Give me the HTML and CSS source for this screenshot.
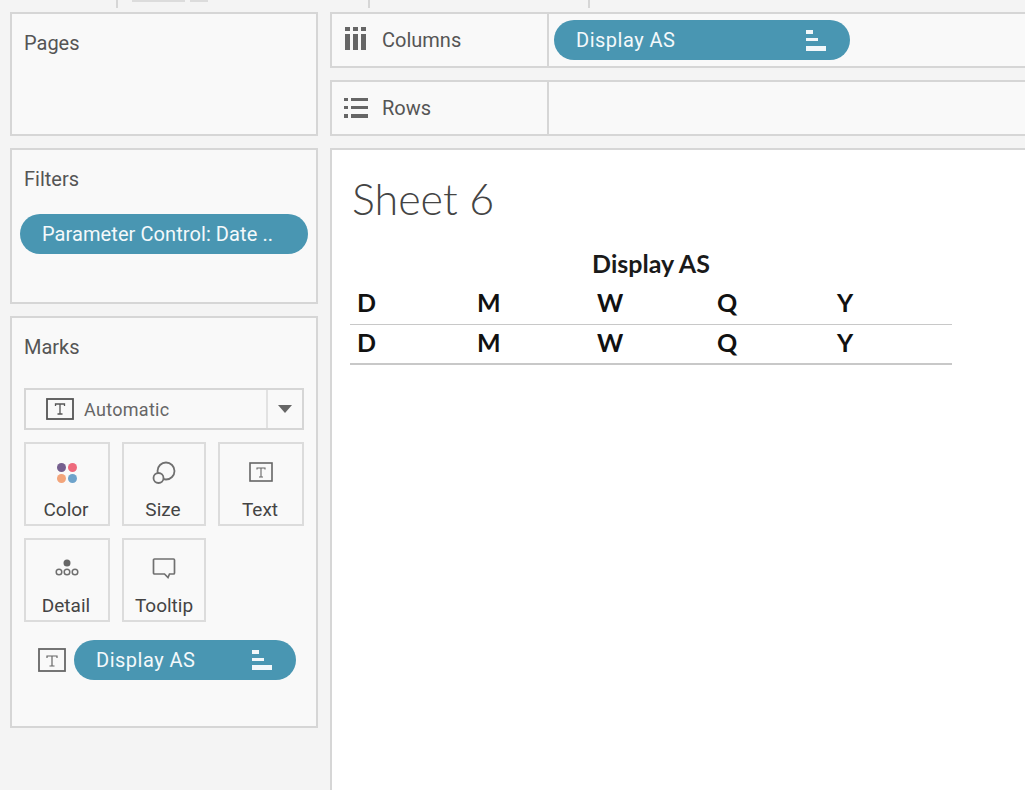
FILE: index.html
```html
<!DOCTYPE html>
<html lang="en">
<head>
<meta charset="utf-8">
<title>Sheet 6</title>
<link rel="stylesheet" href="styles.css">
</head>
<body>
<div class="topstrip">
  <span class="tick tick-a"></span>
  <span class="stub stub-a"></span>
  <span class="stub stub-b"></span>
  <span class="tick tick-b"></span>
  <span class="tick tick-c"></span>
</div>
<div class="workspace">
  <aside class="side">
    <section class="card card-pages"><h2 class="card-title">Pages</h2></section>
    <section class="card card-filters">
      <h2 class="card-title">Filters</h2>
      <div class="pill pill-filter"><span>Parameter Control: Date ..</span></div>
    </section>
    <section class="card card-marks">
      <h2 class="card-title">Marks</h2>
      <div class="dropdown">
        <div class="dropdown-main">
          <svg class="t-big" width="28" height="22" viewBox="0 0 28 22"><rect x="1" y="1" width="26" height="20" fill="none" stroke="#555" stroke-width="1.8"/><path d="M9.500 8V6h9v2M14 6v10M11.500 16h5" fill="none" stroke="#555" stroke-width="1.3"/></svg>
          <span>Automatic</span>
        </div>
        <div class="dropdown-arrow"><svg width="14" height="8" viewBox="0 0 14 8"><path d="M0 0h14L7 8z" fill="#666"/></svg></div>
      </div>
      <div class="mark-grid">
        <div class="mark">
          <svg width="24" height="24" viewBox="0 0 24 24"><circle cx="6.500" cy="6.500" r="4.500" fill="#76608f"/><circle cx="17.500" cy="6.500" r="4.500" fill="#ee6a7c"/><circle cx="6.500" cy="17.500" r="4.500" fill="#f3a57b"/><circle cx="17.500" cy="17.500" r="4.500" fill="#6ea3cb"/></svg>
          <span>Color</span>
        </div>
        <div class="mark">
          <svg width="26" height="24" viewBox="0 0 26 24"><circle cx="15" cy="10" r="8.500" fill="none" stroke="#707070" stroke-width="1.800"/><circle cx="7.500" cy="17" r="5" fill="#f9f9f9" stroke="#707070" stroke-width="1.800"/></svg>
          <span>Size</span>
        </div>
        <div class="mark">
          <svg width="24" height="24" viewBox="0 0 24 24"><rect x="1" y="2" width="22" height="18" fill="none" stroke="#666" stroke-width="1.600"/><path d="M8 8.500V7h8v1.500M12 7v9M10 16h4" fill="none" stroke="#666" stroke-width="1.100"/></svg>
          <span>Text</span>
        </div>
        <div class="mark">
          <svg width="28" height="24" viewBox="0 0 28 24"><circle cx="14" cy="6" r="3.500" fill="#666"/><circle cx="6" cy="15" r="2.800" fill="none" stroke="#707070" stroke-width="1.500"/><circle cx="14" cy="15" r="2.800" fill="none" stroke="#707070" stroke-width="1.500"/><circle cx="22" cy="15" r="2.800" fill="none" stroke="#707070" stroke-width="1.500"/></svg>
          <span>Detail</span>
        </div>
        <div class="mark mark-tip">
          <svg width="24" height="24" viewBox="0 0 24 24"><path d="M2.500 2h19a1 1 0 0 1 1 1v13a1 1 0 0 1-1 1h-4l-1.500 3.500L12.500 17h-10a1 1 0 0 1-1-1V3a1 1 0 0 1 1-1z" fill="none" stroke="#707070" stroke-width="1.700"/></svg>
          <span>Tooltip</span>
        </div>
      </div>
      <div class="mark-field">
        <svg width="28" height="24" viewBox="0 0 28 24"><rect x="1" y="1" width="26" height="22" fill="none" stroke="#666" stroke-width="1.800"/><path d="M9 10V8h10v2M14 8v10M11.500 18h5" fill="none" stroke="#666" stroke-width="1.200"/></svg>
        <div class="pill pill-field">
          <span>Display AS</span>
          <svg class="sort" width="20" height="20" viewBox="0 0 20 20"><path d="M0 0h7v4H0zM0 8h12v3H0zM0 15h20v5H0z" fill="#f2f7fa"/></svg>
        </div>
      </div>
    </section>
  </aside>
  <main class="main">
    <div class="shelf">
      <div class="shelf-label">
        <svg class="shelf-icon icon-columns" width="22" height="23" viewBox="0 0 22 23"><path d="M1 0h5v4H1zM9 0h5v4H9zM17 0h5v4h-5zM1 7h5v16H1zM9 7h5v16H9zM17 7h5v16h-5z" fill="#666"/></svg>
        <span>Columns</span>
      </div>
      <div class="shelf-body">
        <div class="pill pill-shelf">
          <span>Display AS</span>
          <svg class="sort" width="20" height="21" viewBox="0 0 20 21"><path d="M0 0h7v4H0zM0 8h12v3H0zM0 16h20v5H0z" fill="#f2f7fa"/></svg>
        </div>
      </div>
    </div>
    <div class="shelf">
      <div class="shelf-label">
        <svg class="shelf-icon icon-rows" width="24" height="20" viewBox="0 0 24 20"><path d="M0 0h4v3H0zM7 0h17v3H7zM0 8h4v3H0zM7 8h17v3H7zM0 16h4v4H0zM7 16h17v4H7z" fill="#666"/></svg>
        <span>Rows</span>
      </div>
      <div class="shelf-body"></div>
    </div>
    <section class="sheet">
      <h1 class="sheet-title">Sheet 6</h1>
      <div class="crosstab">
        <div class="crosstab-head">Display AS</div>
        <div class="crosstab-row row-first">
          <span>D</span><span>M</span><span>W</span><span>Q</span><span>Y</span>
        </div>
        <div class="crosstab-row row-last">
          <span>D</span><span>M</span><span>W</span><span>Q</span><span>Y</span>
        </div>
      </div>
    </section>
  </main>
</div>
</body>
</html>
```
FILE: styles.css
```css
* { box-sizing: border-box; }
html, body { margin: 0; padding: 0; }
body {
  width: 1025px;
  height: 790px;
  overflow: hidden;
  background: #f4f4f4;
  font-family: Roboto, "Liberation Sans", sans-serif;
  color: #555;
}
.topstrip { height: 12px; display: flex; align-items: flex-start; }
.tick { width: 2px; height: 8px; background: #d6d6d6; }
.tick-a { margin-left: 116px; }
.stub { height: 2px; background: #dcdcdc; }
.stub-a { width: 53px; margin-left: 14px; }
.stub-b { width: 18px; margin-left: 5px; }
.tick-b { margin-left: 160px; }
.tick-c { margin-left: 218px; }
.workspace { display: flex; gap: 12px; padding-left: 10px; }
.side { width: 308px; flex: none; display: flex; flex-direction: column; gap: 12px; }
.card { background: #f9f9f9; border: 2px solid #d6d6d6; padding: 0 12px; }
.card-pages { height: 124px; }
.card-filters { height: 156px; }
.card-marks { height: 412px; }
.card-title {
  margin: 17px 0 0;
  font-size: 20px;
  line-height: 24px;
  font-weight: 400;
  color: #555;
}
.pill {
  display: flex;
  align-items: center;
  justify-content: space-between;
  height: 40px;
  border-radius: 20px;
  background: #4996b2;
  color: #f4f9fb;
  font-size: 20px;
  letter-spacing: 0.5px;
}
.pill-filter { width: 288px; margin: 23px 0 0 -4px; padding: 0 20px 0 22px; white-space: nowrap; letter-spacing: 0.08px; }
.dropdown {
  display: flex;
  height: 42px;
  margin-top: 29px;
  border: 2px solid #d6d6d6;
}
.dropdown-main {
  flex: 1;
  display: flex;
  align-items: center;
  gap: 10px;
  padding-left: 20px;
  font-size: 18px;
  letter-spacing: 0.3px;
  color: #666;
}
.dropdown-arrow {
  width: 36px;
  border-left: 2px solid #e2e2e2;
  display: flex;
  align-items: center;
  justify-content: center;
}
.mark-grid {
  display: grid;
  grid-template-columns: 86px 84px 86px;
  column-gap: 12px;
  row-gap: 12px;
  margin-top: 12px;
}
.mark {
  height: 84px;
  border: 2px solid #dcdcdc;
  display: flex;
  flex-direction: column;
  align-items: center;
  justify-content: flex-start;
  padding-top: 17px;
  font-size: 19px;
  line-height: 22px;
  color: #444;
}
.mark span { margin: 14px 0 0 -2px; }
.mark-tip span { margin-left: 0; }
.mark svg { flex: none; }
.mark-field {
  display: flex;
  align-items: center;
  gap: 8px;
  margin-top: 18px;
  padding-left: 14px;
}
.pill-field { width: 222px; padding: 0 24px 0 22px; }
.sort { flex: none; }
.main { flex: 1; min-width: 0; margin-right: -2px; display: flex; flex-direction: column; gap: 12px; }
.shelf { display: flex; height: 56px; background: #f9f9f9; border: 2px solid #d6d6d6; }
.shelf-label {
  width: 217px;
  flex: none;
  display: flex;
  align-items: center;
  border-right: 2px solid #d6d6d6;
  font-size: 20px;
  color: #555;
  padding-left: 12px;
}
.shelf-icon { flex: none; }
.icon-columns { margin-right: 16px; margin-bottom: 3px; }
.icon-rows { margin-right: 14px; }
.shelf-body { flex: 1; display: flex; align-items: center; padding-left: 5px; }
.pill-shelf { width: 296px; padding: 0 24px 0 22px; }
.sheet { height: 660px; background: #fff; border: 2px solid #d6d6d6; padding: 0 0 0 18px; }
.sheet-title {
  margin: 23px 0 0 2px;
  font-family: Lato, sans-serif;
  font-size: 43px;
  line-height: 52px;
  font-weight: 300;
  color: #444;
}
.crosstab { width: 602px; margin-top: 19px; }
.crosstab-head {
  height: 40px;
  line-height: 38px;
  text-align: center;
  font-family: Lato, sans-serif;
  font-size: 25px;
  font-weight: 700;
  color: #1a1a1a;
}
.crosstab-row {
  display: grid;
  grid-template-columns: 120px 120px 120px 120px 120px;
  height: 40px;
  padding-left: 7px;
  font-family: Lato, sans-serif;
  font-size: 25px;
  font-weight: 700;
  color: #111;
  border-bottom: 1px solid #c8c8c8;
}
.row-first { height: 41px; line-height: 36px; }
.row-last { line-height: 35px; border-bottom: 2px solid #c8c8c8; }
```
